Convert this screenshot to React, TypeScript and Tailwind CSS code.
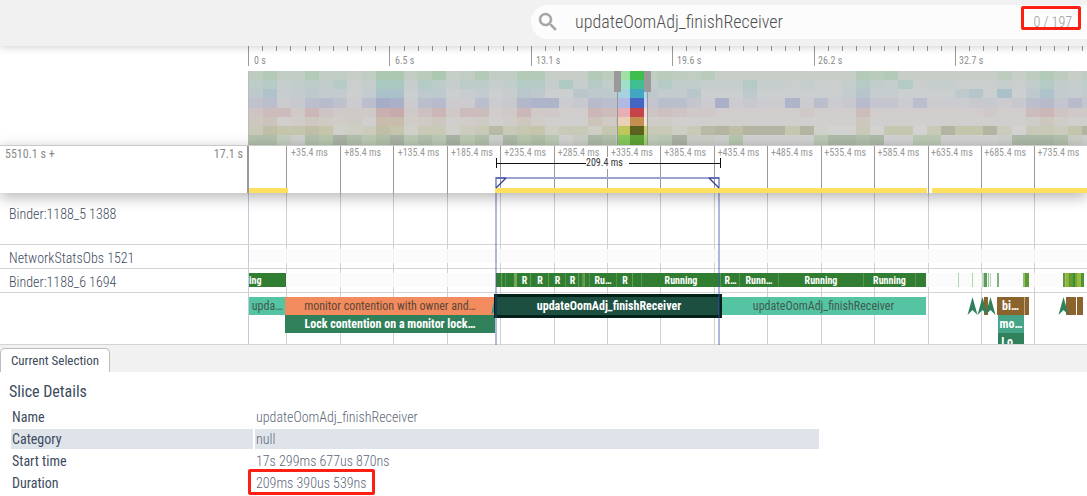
import type { ReactNode } from "react";

const SECOND_TICKS = ["0 s", "6.5 s", "13.1 s", "19.6 s", "26.2 s", "32.7 s"];
const GRID = Array.from({ length: 24 }, (_, i) => Math.round(37.4 + 53.43 * i));

/* CPU load per column, one string for each core, 0 = idle, 9 = busy */
const LOAD = [
  "352252212772471252255111534924324111111111154511111113135312",
  "341232401771531331254161424924221115110100142150110001025212",
  "361232202770330120143004334932240003000000251100003507036212",
  "340145304980450040167701544924420801007040152204000110145252",
  "244152111781351440151100544923211000000100040000000010045211",
  "340132120771230120131000424911000000000000030000000000013100",
  "476676123761441348456244254944248979995910040550496693044369",
  "773176975795759571867502874945922160000058878005500001888721",
];
const IDLE = ["#cacfcb", "#cacfce", "#cccfd0", "#ccccd0", "#d0cdcc", "#d1cfcd", "#d2d2d0", "#d2d2d2"];
const BUSY = ["#a3c6a8", "#a0c7bc", "#a2bdc7", "#a6adc7", "#c8a6a8", "#c6b7a3", "#b4b4a2", "#aab3a6"];
const MID = ["", "", "", "", "", "", "#c4c5ab", "#b6c7ad"];
const SELECTED_A = ["#9fe0a5", "#a0dfc9", "#a5d3e0", "#b0b9e3", "#e7afb3", "#e9d1b8", "#bfc65a", "#88c95b"];
const SELECTED_B = ["#3fbe50", "#42be93", "#42a6c0", "#4366c3", "#c44549", "#c48e51", "#5c6120", "#5fa136"];
const SELECTED_C = ["#b5e8ba", "#b5e8d5", "#a8d8ea", "#c8d0f5", "#f3dada", "#f5e5d6", "#c9cf70", "#a0d670"];

function mix(a: string, b: string, t: number) {
  const part = (s: string, i: number) => parseInt(s.slice(1 + i * 2, 3 + i * 2), 16);
  const ch = [0, 1, 2].map((i) => Math.round(part(a, i) + (part(b, i) - part(a, i)) * t));
  return `rgb(${ch.join(",")})`;
}

function cellColor(row: number, level: number) {
  if (row < 6) return mix(IDLE[row], BUSY[row], level / 9);
  return level <= 6 ? mix(IDLE[row], MID[row], level / 6) : mix(MID[row], BUSY[row], (level - 6) / 3);
}

const ROW_TOP = [0, 9, 18, 27, 37, 46, 55, 64, 74];

function Heatmap() {
  return (
    <svg className="block h-[74px] w-full bg-[#d2d2d2]" shapeRendering="crispEdges">
      {LOAD.map((line, r) =>
        line.split("").map((c, i) => (
          <rect
            key={`${r}-${i}`}
            x={i * 14.13 + 0.5}
            y={ROW_TOP[r]}
            width={14.2}
            height={ROW_TOP[r + 1] - ROW_TOP[r]}
            fill={cellColor(r, Number(c))}
          />
        )),
      )}
      {SELECTED_A.map((c, r) => {
        const h = ROW_TOP[r + 1] - ROW_TOP[r];
        return (
          <g key={c}>
            <rect x={370} y={ROW_TOP[r]} width={12} height={h} fill={c} />
            <rect x={382} y={ROW_TOP[r]} width={14} height={h} fill={SELECTED_B[r]} />
            <rect x={396} y={ROW_TOP[r]} width={3} height={h} fill={SELECTED_C[r]} />
          </g>
        );
      })}
      <rect x={369} y={0} width={1} height={74} fill="#999" />
      <rect x={399} y={0} width={1} height={74} fill="#999" />
      <rect x={366} y={0} width={7} height={21} fill="#999" />
      <rect x={396} y={0} width={7} height={21} fill="#999" />
      <rect x={0} y={0} width={1} height={74} fill="#bbb" />
    </svg>
  );
}

function GridLines({ color }: { color: string }) {
  return (
    <svg className="absolute inset-0 h-full w-full" shapeRendering="crispEdges">
      {GRID.map((x) => (
        <rect key={x} x={x} y={0} width={1} height="100%" fill={color} />
      ))}
    </svg>
  );
}

type TrackProps = { label?: string; size: string; pad?: string; children?: ReactNode };

function Track({ label, size, pad = "pt-[3px]", children }: TrackProps) {
  return (
    <div className={`flex border-b border-[#d4d4d4] ${size}`}>
      <div className={`w-[248px] shrink-0 pl-[9px] text-sm leading-5 font-light text-[#3c4b5d] ${pad}`}>{label}</div>
      <div className="relative min-w-0 flex-1 overflow-hidden border-l border-[#c2cade]">
        <GridLines color="#cfcfcf" />
        {children}
      </div>
    </div>
  );
}

type Bar = { x: number; w: number; text?: string; tone: string };

function Bars({ bars, className }: { bars: Bar[]; className: string }) {
  return (
    <>
      {bars.map((b) => (
        <div
          key={b.x}
          className={`absolute flex items-center justify-center overflow-hidden whitespace-nowrap ${className} ${b.tone}`}
          style={{ left: b.x, width: b.w }}
        >
          {b.text}
        </div>
      ))}
    </>
  );
}

const RUN = "bg-[#317d31] text-white";
const SEAM = "bg-[#67a04c]";
const STATES: Bar[] = [
  { x: 247, w: 430, tone: RUN },
  { x: 269, w: 13, text: "R", tone: RUN },
  { x: 283, w: 16, text: "R", tone: RUN },
  { x: 301, w: 15, text: "R", tone: RUN },
  { x: 317, w: 13, text: "R", tone: RUN },
  { x: 341, w: 26, text: "Ru…", tone: RUN },
  { x: 369, w: 14, text: "R", tone: RUN },
  { x: 393, w: 78, text: "Running", tone: RUN },
  { x: 473, w: 17, text: "R…", tone: RUN },
  { x: 492, w: 36, text: "Runn…", tone: RUN },
  { x: 530, w: 84, text: "Running", tone: RUN },
  { x: 616, w: 49, text: "Running", tone: RUN },
];
const SEAMS: Bar[] = [
  ...[252, 281, 299, 329, 335, 383].map((x) => ({ x, w: 1, tone: SEAM })),
  { x: 265, w: 3, tone: "bg-[#76a65a]" },
  { x: 333, w: 2, tone: "bg-[#5b964a]" },
  ...[256, 316, 340, 367, 392, 471, 490, 529, 614, 666].map((x) => ({ x, w: 1, tone: "bg-[#559350]" })),
  { x: 709, w: 1, tone: "bg-[#b5d6b5]" },
  { x: 723, w: 1, tone: "bg-[#b5d6b5]" },
  { x: 733, w: 2, tone: "bg-[#b7d8b5]" },
  { x: 735, w: 3, tone: "bg-[#5c9c5c]" },
  { x: 739, w: 1, tone: "bg-[#93c493]" },
  { x: 741, w: 1, tone: "bg-[#b5d6b5]" },
  { x: 748, w: 2, tone: "bg-[#84b184]" },
  { x: 774, w: 2, tone: "bg-[#8dbd6b]" },
  { x: 776, w: 4, tone: "bg-[#5f9a35]" },
  { x: 814, w: 2, tone: "bg-[#5a9a45]" },
  { x: 816, w: 1, tone: "bg-[#a9c06d]" },
  { x: 817, w: 3, tone: "bg-[#8fb530]" },
  { x: 820, w: 4, tone: "bg-[#5f9c35]" },
  { x: 824, w: 2, tone: "bg-[#3f8a35]" },
  { x: 826, w: 2, tone: "bg-[#6fa635]" },
  { x: 828, w: 4, tone: "bg-[#9abb33]" },
  { x: 832, w: 3, tone: "bg-[#4e9240]" },
];
const SLICES_0: Bar[] = [
  { x: 0, w: 36, text: "upda…", tone: "bg-[#55c4a3] text-[#3f5a50]" },
  { x: 36, w: 210, text: "monitor contention with owner and…", tone: "bg-[#f28b5e] text-[#5f4638]" },
  { x: 472, w: 205, text: "updateOomAdj_finishReceiver", tone: "bg-[#55c4a3] text-[#3f5a50]" },
  { x: 735, w: 4, tone: "bg-[#8a632d]" },
  { x: 748, w: 27, text: "bi…", tone: "bg-[#8a632d] font-bold text-white" },
  { x: 775, w: 1, tone: "bg-[#c0a884]" },
  { x: 776, w: 4, tone: "bg-[#8a632d]" },
  { x: 817, w: 10, tone: "bg-[#8a632d]" },
  { x: 828, w: 6, tone: "bg-[#8a632d]" },
];
const SLICES_1: Bar[] = [
  { x: 36, w: 210, text: "Lock contention on a monitor lock…", tone: "bg-[#31805c] text-white" },
  { x: 749, w: 26, text: "mo…", tone: "bg-[#45a388] text-white" },
];
const SLICES_2: Bar[] = [{ x: 749, w: 26, text: "Lo…", tone: "bg-[#31805c] text-white" }];

const DETAILS = [
  ["Name", "updateOomAdj_finishReceiver"],
  ["Category", "null"],
  ["Start time", "17s 299ms 677us 870ns"],
  ["Duration", "209ms 390us 539ns"],
];

export default function App() {
  return (
    <div className="min-h-screen overflow-hidden bg-white font-['Roboto_Condensed','Liberation_Sans_Narrow',Roboto,sans-serif]">
      <header className="relative z-10 flex h-[46px] items-start bg-[#f1f1f1] pt-[5px] pl-[531px] shadow-[0_1px_8px_rgba(0,0,0,0.2)]">
        <div className="relative flex h-[34px] min-w-0 flex-1 items-center rounded-l-full bg-[#fcfcfc] pr-[15px] pl-[5px]">
          <svg className="size-6 shrink-0" viewBox="0 0 24 24" fill="#a3a3a3" stroke="#a3a3a3" strokeWidth="0.5" aria-hidden="true">
            <path d="M15.5 14h-.79l-.28-.27A6.47 6.47 0 0 0 16 9.500 6.500 6.500 0 1 0 9.500 16c1.610 0 3.090-.59 4.230-1.570l.27.28v.79l5 4.990L20.490 19l-4.990-5zm-6 0C7.010 14 5 11.990 5 9.500S7.010 5 9.500 5 14 7.010 14 9.500 11.990 14 9.500 14z" />
          </svg>
          <input
            aria-label="Search"
            defaultValue="updateOomAdj_finishReceiver"
            className="ml-[15px] min-w-0 flex-1 bg-transparent text-lg font-light text-[#505050] outline-none"
          />
          <span className="text-sm font-light text-[#9a9a9a]">0 / 197</span>
          <div className="absolute top-px right-[6px] h-6 w-[60px] rounded-xs border-3 border-[#fb1f14]" />
        </div>
      </header>

      <section className="flex">
        <div className="w-[248px] shrink-0" />
        <div className="min-w-0 flex-1">
          <div className="relative h-[25px] overflow-hidden">
            <svg className="absolute inset-0 h-full w-full" shapeRendering="crispEdges">
              {Array.from({ length: 60 }, (_, i) => (
                <rect key={i} x={Math.round(i * 14.14)} y={0} width={1} height={i % 10 === 0 ? 20 : 5} fill="#9a9a9a" />
              ))}
            </svg>
            <div className="flex">
              {SECOND_TICKS.map((t) => (
                <span key={t} className="w-[141px] shrink-0 pt-[9px] pl-[6px] text-[10px] leading-3 text-[#8f8f8f]">
                  {t}
                </span>
              ))}
            </div>
          </div>
          <Heatmap />
        </div>
      </section>

      <section className="relative z-10 flex h-12 border-t border-[#cacaca] bg-white shadow-[0_4px_14px_rgba(0,0,0,0.3)]">
        <div className="flex w-[247px] shrink-0 justify-between pr-1 pl-[5px] text-xs leading-4 text-[#8a8a8a]">
          <span>5510.1 s +</span>
          <span>17.1 s</span>
        </div>
        <div className="relative min-w-0 flex-1 overflow-hidden border-l-2 border-[#999]">
          <GridLines color="#999" />
          <div className="flex pl-[38px]">
            {GRID.slice(0, 15).map((x, i) => (
              <span key={x} className="w-0 shrink-0 grow basis-[53px] pl-1 text-[10px] leading-[14px] whitespace-nowrap text-[#999]">
                +{35 + 50 * i}.4 ms
              </span>
            ))}
          </div>
          <svg className="absolute inset-0 h-full w-full" fill="none">
            <g shapeRendering="crispEdges">
              <rect x={0} y={42} width={39} height={5} fill="#fedf60" />
              <rect x={246} y={42} width={432} height={5} fill="#fedf60" />
              <rect x={683} y={42} width="100%" height={5} fill="#fedf60" />
              <rect x={247} y={17} width={225} height={1} fill="#111" />
              <rect x={247} y={12} width={1} height={10} fill="#111" />
              <rect x={471} y={12} width={1} height={10} fill="#111" />
              <rect x={246} y={31} width={225} height={2} fill="#9aa2d0" />
              <rect x={246} y={31} width={2} height={11} fill="#9aa2d0" />
              <rect x={469} y={31} width={2} height={11} fill="#9aa2d0" />
            </g>
            <path d="M257 32 L247 42 M460 32 L470 42" stroke="#2f3f97" strokeWidth="1.3" />
            <path d="M247 32 h10 M460 32 h10" stroke="#2f3f97" />
          </svg>
          <span className="absolute top-[11px] left-[337px] w-[43px] bg-white text-[10px] leading-3 whitespace-nowrap text-[#333]">
            209.4 ms
          </span>
        </div>
      </section>

      <section className="relative">
        <Track label="Binder:1188_5 1388" size="h-[52px]" pad="pt-[11px]" />
        <Track label="NetworkStatsObs 1521" size="h-6">
          <div className="absolute inset-x-0 top-1 h-[14px] bg-[#fafafa]/80" />
        </Track>
        <Track label="Binder:1188_6 1694" size="h-6">
          <div className="absolute inset-x-0 top-1 h-[14px] bg-[#fafafa]/80" />
          <div className="absolute top-1 left-0 flex h-[14px] w-[37px] items-center overflow-hidden bg-[#317d31] text-[10px] font-bold text-white">
            ing
          </div>
          <Bars bars={STATES} className="top-1 h-[14px] text-[10px] font-bold" />
          <Bars bars={SEAMS} className="top-1 h-[14px]" />
        </Track>
        <Track size="h-[52px]">
          <Bars bars={SLICES_0} className="top-1 h-[18px] text-xs" />
          <Bars bars={SLICES_1} className="top-[22px] h-[18px] text-xs font-bold" />
          <Bars bars={SLICES_2} className="top-10 h-[18px] text-xs font-bold" />
          <svg className="absolute inset-0 h-full w-full">
            {[723, 733, 741, 814].map((x) => (
              <path key={x} d={`M${x + 0.5} 4 l5 18 l-5 -5 l-5 5 z`} fill="#31805c" />
            ))}
            <path d="M246 4 v14 l-4 4 z" fill="#3f9186" />
          </svg>
          <div className="absolute top-px left-[245px] flex h-6 w-[228px] items-center justify-center border-3 border-[#00201a] bg-[#1d4f40] pl-0.5 text-xs font-bold text-white">
            updateOomAdj_finishReceiver
          </div>
        </Track>
        <div className="pointer-events-none absolute inset-y-0 left-[495px] w-[225px] border-x-2 border-[#3f51b5]/40" />
      </section>

      <nav className="flex h-[27px] items-end bg-[#f1f1f1]">
        <button className="h-6 w-[110px] rounded-t-[5px] border border-b-0 border-[#bdbdbd] bg-white text-[13px] leading-5 text-[#3c4b5d]">
          Current Selection
        </button>
      </nav>

      <main className="px-[9px] pt-[10px]">
        <h2 className="text-base leading-5 text-[#3c4b5d]">Slice Details</h2>
        <table className="mt-[3px] w-[76%] table-fixed border-separate border-spacing-x-[2px] border-spacing-y-[2px] text-sm leading-5 text-[#3c4b5d]">
          <tbody>
            {DETAILS.map(([name, value], i) => (
              <tr key={name} className={i === 1 ? "bg-[#dfe3ea]" : ""}>
                <th scope="row" className="w-[242px] pl-px text-left font-normal">
                  {name}
                </th>
                <td className="relative pl-px font-light text-[#5c6878]">
                  {value}
                  {name === "Duration" && (
                    <div className="absolute -top-1 -left-[7px] h-[26px] w-[127px] rounded-xs border-3 border-[#fb1f14]" />
                  )}
                </td>
              </tr>
            ))}
          </tbody>
        </table>
      </main>
    </div>
  );
}
